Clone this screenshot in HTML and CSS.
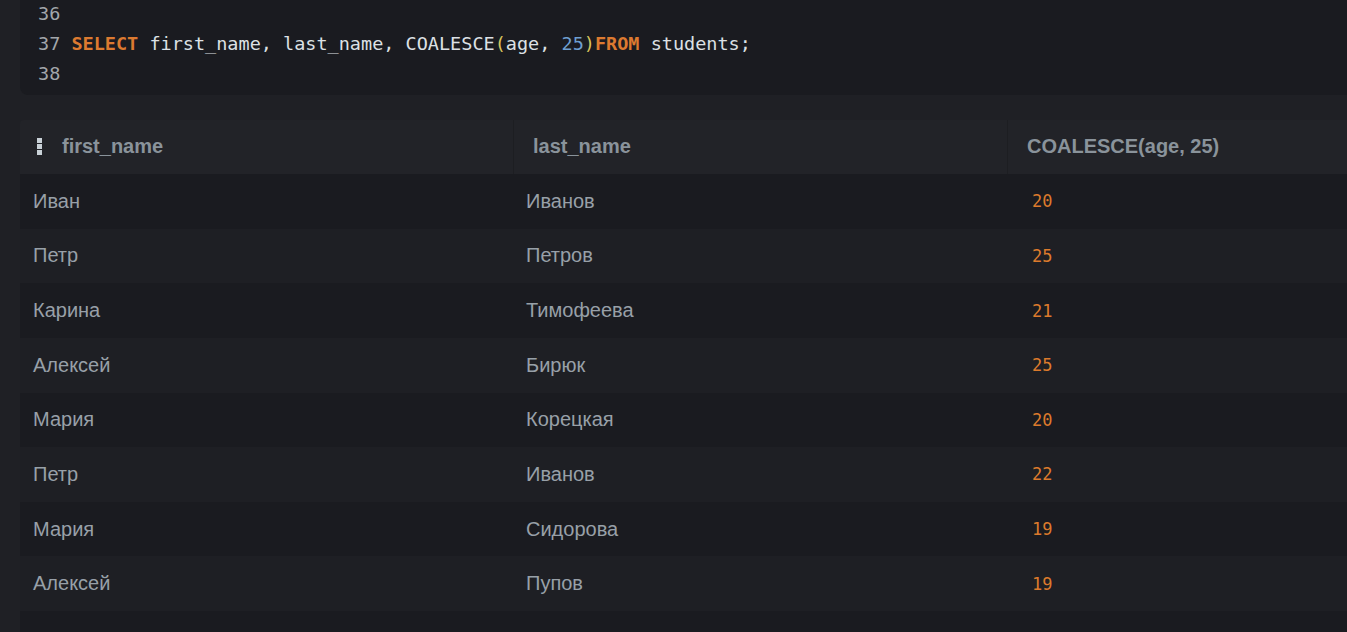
FILE: index.html
```html
<!DOCTYPE html>
<html lang="ru">
<head>
<meta charset="utf-8">
<title>SQL result</title>
<link rel="stylesheet" href="styles.css">
</head>
<body>
<div class="page">
  <div class="code">
    <div class="line"><span class="ln">36</span></div>
    <div class="line"><span class="ln">37</span> <span class="kw">SELECT</span> first_name, last_name, COALESCE<span class="paren">(</span>age, <span class="num">25</span><span class="paren">)</span><span class="kw">FROM</span> students;</div>
    <div class="line"><span class="ln">38</span></div>
  </div>

  <div class="table">
    <div class="row head">
      <div class="cell hcell first"><svg class="drag" width="5" height="17" viewBox="0 0 5 17"><rect x="0" y="0" width="5" height="5"/><rect x="0" y="6" width="5" height="5"/><rect x="0" y="12" width="5" height="5"/></svg><span>first_name</span></div>
      <div class="cell hcell sep">last_name</div>
      <div class="cell hcell sep">COALESCE(age, 25)</div>
    </div>
    <div class="row"><div class="cell">Иван</div><div class="cell">Иванов</div><div class="cell n">20</div></div>
    <div class="row"><div class="cell">Петр</div><div class="cell">Петров</div><div class="cell n">25</div></div>
    <div class="row"><div class="cell">Карина</div><div class="cell">Тимофеева</div><div class="cell n">21</div></div>
    <div class="row"><div class="cell">Алексей</div><div class="cell">Бирюк</div><div class="cell n">25</div></div>
    <div class="row"><div class="cell">Мария</div><div class="cell">Корецкая</div><div class="cell n">20</div></div>
    <div class="row"><div class="cell">Петр</div><div class="cell">Иванов</div><div class="cell n">22</div></div>
    <div class="row"><div class="cell">Мария</div><div class="cell">Сидорова</div><div class="cell n">19</div></div>
    <div class="row"><div class="cell">Алексей</div><div class="cell">Пупов</div><div class="cell n">19</div></div>
    <div class="row"><div class="cell"></div><div class="cell"></div><div class="cell n"></div></div>
  </div>
</div>
</body>
</html>
```

FILE: styles.css
```css
html, body {
  margin: 0;
  padding: 0;
  background: #1f2025;
  overflow: hidden;
}
.page {
  padding-left: 20px;
  width: 1327px;
  height: 632px;
  overflow: hidden;
}
.code {
  background: #1a1b20;
  border-bottom-left-radius: 8px;
  padding: 0 0 5px 18px;
  font-family: "DejaVu Sans Mono", monospace;
  font-size: 18.5px;
  line-height: 30px;
  color: #dde1e5;
}
.line {
  height: 30px;
  white-space: pre;
  margin-top: -1px;
  margin-bottom: 1px;
}
.ln { color: #a3a7ab; }
.kw { color: #dc7a30; font-weight: bold; }
.paren { color: #d8c45c; }
.num { color: #6e9fd0; }

.table {
  margin-top: 25px;
  display: flex;
  flex-direction: column;
}
.row {
  display: grid;
  grid-template-columns: 493px 494px 1fr;
  height: 54.625px;
  background: #1a1b20;
}
.row:nth-child(odd) { background: #1e1f24; }
.row.head {
  height: 54px;
  background: #222328;
  border-top-left-radius: 4px;
}
.cell {
  display: flex;
  align-items: center;
  padding-left: 13px;
  font-family: "Liberation Sans", Arial, sans-serif;
  font-size: 20px;
  color: #98a0a8;
}
.hcell {
  font-weight: bold;
  color: #8a939b;
  padding-left: 19px;
  padding-bottom: 2px;
}
.hcell.first { padding-left: 17px; gap: 20px; }
.hcell.sep { border-left: 1px solid #1d1e22; }
.drag { fill: #c9d1d7; }
.n {
  font-family: "DejaVu Sans Mono", monospace;
  font-size: 17px;
  font-weight: 500;
  color: #dc7a2c;
  padding-left: 25px;
}
```
